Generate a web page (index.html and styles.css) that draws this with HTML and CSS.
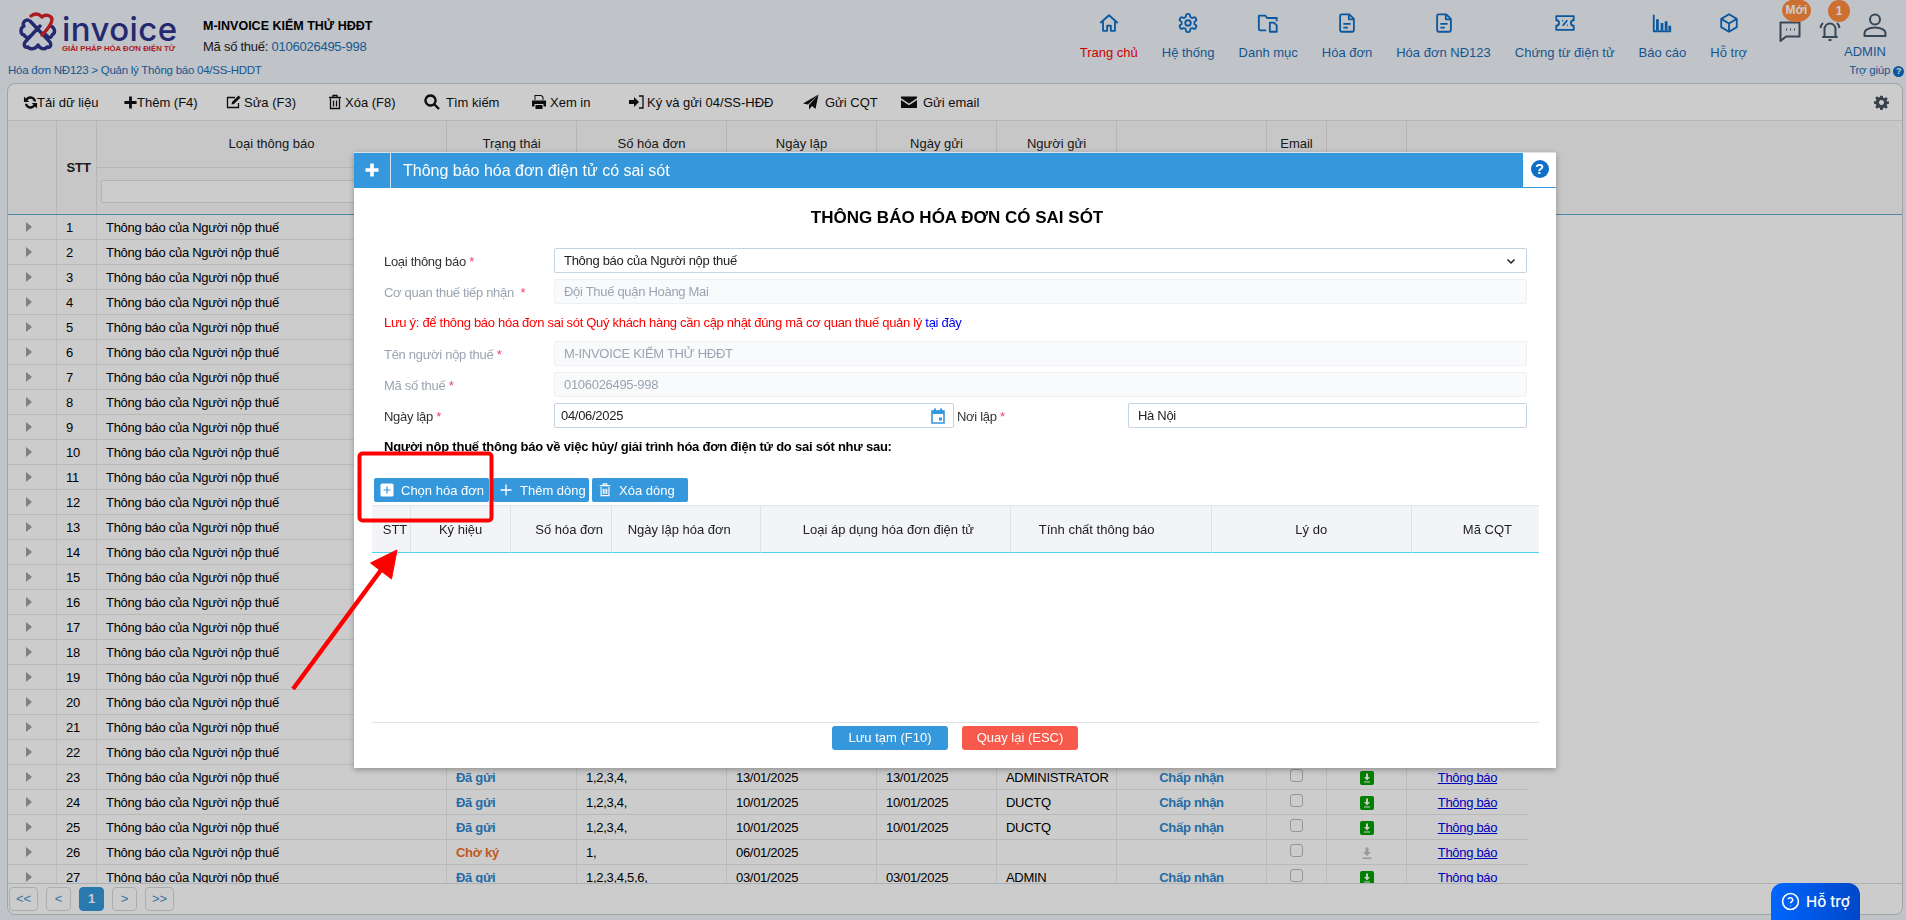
FILE: index.html
```html
<!DOCTYPE html>
<html>
  <head>
    <meta charset="utf-8" />
    <title>Quản lý Thông báo 04/SS-HDDT</title>
    <link rel="stylesheet" href="styles.css">
  </head>
  <body>
    <!--top header-->
    <div class="topbar">
      <div class="logo">
        <svg class="logo-mark" viewBox="0 0 40 40" fill="none" stroke-width="3.4" stroke-linecap="round" stroke-linejoin="round">
          <path stroke="#2f348c" d="M12 10 L31 30 C34 33 33 37 29 36 C27 39 22 38 20 34 C18 38 12 39 10 36 C6 37 5 33 8 30 L22 15"/>
          <path stroke="#2f348c" d="M10 9 C6 9 4 13 6 15 C2 17 2 23 6 24 C7 26 9 27 11 26"/>
          <path stroke="#2f348c" d="M33 15 C37 17 38 22 34 24 C34 26 32 27 30 26 L26 22"/>
          <path stroke="#d8232a" d="M13 5 C17 2 21 3 24 6 C27 3 33 4 34 8 C34 13 29 19 24 24"/>
        </svg>
        <div class="logo-text">
          <div class="logo-name">invoice</div>
          <div class="logo-sub">GIẢI PHÁP HÓA ĐƠN ĐIỆN TỬ</div>
        </div>
      </div>
      <div class="company">
        <div class="company-name">M-INVOICE KIỂM THỬ HĐĐT</div>
        <div class="company-tax">Mã số thuế: <span>0106026495-998</span></div>
      </div>
      <div class="nav">
        <div class="nav-item active">
          <svg viewBox="0 0 24 24"><path d="M2.5 12 12 3.5l9.5 8.5"/><path d="M5.5 10v10.500h4.500V15h4v5.500h4.500V10"/></svg>
          Trang chủ
        </div>
        <div class="nav-item">
          <svg viewBox="0 0 24 24"><path d="M12.22 2h-.44a2 2 0 0 0-2 2v.18a2 2 0 0 1-1 1.73l-.43.25a2 2 0 0 1-2 0l-.15-.08a2 2 0 0 0-2.73.73l-.22.38a2 2 0 0 0 .73 2.73l.15.1a2 2 0 0 1 1 1.72v.51a2 2 0 0 1-1 1.74l-.15.09a2 2 0 0 0-.73 2.73l.22.38a2 2 0 0 0 2.73.73l.15-.08a2 2 0 0 1 2 0l.43.25a2 2 0 0 1 1 1.73V20a2 2 0 0 0 2 2h.44a2 2 0 0 0 2-2v-.18a2 2 0 0 1 1-1.73l.43-.25a2 2 0 0 1 2 0l.15.08a2 2 0 0 0 2.73-.73l.22-.39a2 2 0 0 0-.73-2.73l-.15-.08a2 2 0 0 1-1-1.74v-.5a2 2 0 0 1 1-1.74l.15-.09a2 2 0 0 0 .73-2.73l-.22-.38a2 2 0 0 0-2.73-.73l-.15.08a2 2 0 0 1-2 0l-.43-.25a2 2 0 0 1-1-1.73V4a2 2 0 0 0-2-2z"/><circle cx="12" cy="12" r="3"/></svg>
          Hệ thống
        </div>
        <div class="nav-item">
          <svg viewBox="0 0 24 24"><path d="M10 20H3.500a1.500 1.500 0 0 1-1.500-1.500V4h7l2 2.500h10.500V10"/><path d="M14 11.500h4.500l3 3V21.500H14z"/></svg>
          Danh mục
        </div>
        <div class="nav-item">
          <svg viewBox="0 0 24 24"><path d="M6 2.5h8.500l5 5V20a1.500 1.500 0 0 1-1.500 1.500H6A1.500 1.500 0 0 1 4.500 20V4A1.500 1.500 0 0 1 6 2.500z"/><path d="M14 3v5h5M8 13h8M8 17h5"/></svg>
          Hóa đơn
        </div>
        <div class="nav-item">
          <svg viewBox="0 0 24 24"><path d="M6 2.5h8.500l5 5V20a1.500 1.500 0 0 1-1.500 1.500H6A1.500 1.500 0 0 1 4.500 20V4A1.500 1.500 0 0 1 6 2.500z"/><path d="M14 3v5h5M8 13h8M8 17h5"/></svg>
          Hóa đơn NĐ123
        </div>
        <div class="nav-item">
          <svg viewBox="0 0 24 24"><path d="M2.5 4.500h19v4.500a3 3 0 0 0 0 6v4.500h-19V15a3 3 0 0 0 0-6z"/><path d="M9.5 15 14.500 9M9 9.500h1M14 14.500h1"/></svg>
          Chứng từ điện tử
        </div>
        <div class="nav-item">
          <svg viewBox="0 0 24 24"><path d="M3 3v18h19"/><path class="thick" d="M7 8v12M12 12v8M16.500 10v10M20.500 15v5"/></svg>
          Báo cáo
        </div>
        <div class="nav-item">
          <svg viewBox="0 0 24 24"><path d="M12 2.500 20.500 7.500v9L12 21.500 3.500 16.500v-9z"/><path d="M3.500 7.500 12 12.500l8.500-5M12 12.500v9"/></svg>
          Hỗ trợ
        </div>
      </div>
      <div class="user-tools">
        <div class="tool-icon chat">
          <svg viewBox="0 0 24 24"><path d="M2.500 4.500h19v14H8l-5.500 4.500z"/><path d="M8 11.500h1M12 11.500h1M16 11.500h1"/></svg>
          <span class="badge badge-new">Mới</span>
        </div>
        <div class="tool-icon bell">
          <svg viewBox="0 0 24 24"><path d="M6.500 18v-7a5.500 5.500 0 0 1 11 0v7l1.500 1H5z"/><path d="M10.500 22h3M2.500 10c.3-2.200 1-3.700 2.500-5M21.500 10c-.3-2.200-1-3.700-2.500-5"/></svg>
          <span class="badge badge-count">1</span>
        </div>
        <div class="user">
          <svg viewBox="0 0 24 24"><circle cx="12" cy="6.500" r="5"/><path d="M1.500 23v-2.500c0-3.500 4.500-6 10.500-6s10.500 2.500 10.500 6V23z"/></svg>
          ADMIN
        </div>
      </div>
    </div>
    <div class="crumbs">
      <div>Hóa đơn NĐ123 &gt; Quản lý Thông báo 04/SS-HDDT</div>
      <div class="help-link">Trợ giúp <span class="help-dot">?</span></div>
    </div>

    <!--main panel-->
    <div class="panel">
      <div class="toolbar">
        <div class="tool tool-tight"><svg viewBox="0 0 16 16"><path d="M14 6.800A6.200 6.200 0 0 0 3.100 3.700L1 1.700V7.500h5.800L4.800 5.500a3.800 3.800 0 0 1 6.700 1.300zM2 9.200a6.200 6.200 0 0 0 10.900 3.100l2.100 2V8.500H9.200l2 2a3.800 3.800 0 0 1-6.700-1.300z"/></svg>Tải dữ liệu</div>
        <div class="tool tool-tight"><svg viewBox="0 0 16 16"><path d="M6.500 1.500h3v5h5v3h-5v5h-3v-5h-5v-3h5z"/></svg>Thêm (F4)</div>
        <div class="tool tool-s2"><svg viewBox="0 0 16 16"><path class="line" d="M12.500 9v4.500h-11v-10H9"/><path d="M6 8 12.500 1.500l2 2L8 10l-2.500.5z"/></svg>Sửa (F3)</div>
        <div class="tool tool-s2"><svg viewBox="0 0 16 16"><path class="line" d="M3.500 4.500v10h9v-10M2 3.500h12M6 3.500V1.500h4v2M6.500 6.500v6M9.500 6.500v6"/></svg>Xóa (F8)</div>
        <div class="tool tool-s6"><svg viewBox="0 0 16 16"><path class="line thick-line" d="M6.500 1.500a5 5 0 1 0 .01 0zM10 10l5 5"/></svg>Tìm kiếm</div>
        <div class="tool tool-s3"><svg viewBox="0 0 16 16"><path d="M3.500 1h7l2 2v3h-1V3.500L10 2H4.500v4h-1zM1 6.500h14v6h-2.500V10h-9v2.500H1zM4.500 11h7v4h-7z"/></svg>Xem in</div>
        <div class="tool tool-s3"><svg viewBox="0 0 16 16"><path d="M1 6h5V3l5 5-5 5v-3H1z"/><path class="line" d="M11 2h4v12h-4"/></svg>Ký và gửi 04/SS-HĐĐ</div>
        <div class="tool tool-s6"><svg viewBox="0 0 16 16"><path d="M15.500.5 12.500 15 9 12l-3 3.500V11zM0 9.500 15.500.5 5 10.500z"/></svg>Gửi CQT</div>
        <div class="tool tool-s6"><svg viewBox="0 0 16 16"><path d="M0 2.500h16v1.800L8 9.500 0 4.300zM0 6l8 5.200L16 6v8H0z"/></svg>Gửi email</div>
        <svg class="tool-gear" viewBox="0 0 24 24"><path d="M10 1h4l.6 3.200 1.900.8 2.700-1.900 2.800 2.800-1.900 2.700.8 1.900L24 10v4l-3.100.6-.8 1.900 1.900 2.700-2.800 2.800-2.700-1.900-1.900.8L14 24h-4l-.6-3.100-1.900-.8-2.700 1.900-2.800-2.800 1.900-2.700-.8-1.900L0 14v-4l3.100-.6.8-1.900L2 4.800 4.800 2l2.700 1.900 1.900-.8zM12 8a4 4 0 1 0 .01 0z" fill-rule="evenodd"/></svg>
      </div>

      <div class="grid-head">
        <table class="data-table">
          <colgroup>
            <col class="c-exp"><col class="c-stt"><col class="c-type"><col class="c-status"><col class="c-no"><col class="c-date"><col class="c-send"><col class="c-user"><col class="c-result"><col class="c-check"><col class="c-dl"><col class="c-link">
          </colgroup>
          <tr class="head-top">
            <th rowspan="2"></th>
            <th rowspan="2" class="th-stt">STT</th>
            <th>Loại thông báo</th>
            <th>Trạng thái</th>
            <th>Số hóa đơn</th>
            <th>Ngày lập</th>
            <th>Ngày gửi</th>
            <th>Người gửi</th>
            <th></th>
            <th>Email</th>
            <th></th>
            <th class="no-line"></th>
          </tr>
          <tr class="head-filter">
            <th><input class="filter" /></th>
            <th></th><th></th><th></th><th></th><th></th><th></th><th></th><th></th>
            <th class="no-line"></th>
          </tr>
        </table>
      </div>

      <div class="grid-body">
        <table class="data-table">
          <colgroup>
            <col class="c-exp"><col class="c-stt"><col class="c-type"><col class="c-status"><col class="c-no"><col class="c-date"><col class="c-send"><col class="c-user"><col class="c-result"><col class="c-check"><col class="c-dl"><col class="c-link">
          </colgroup>
          <tr><td class="exp"><i></i></td><td>1</td><td>Thông báo của Người nộp thuế</td><td colspan="9"></td></tr>
          <tr><td class="exp"><i></i></td><td>2</td><td>Thông báo của Người nộp thuế</td><td colspan="9"></td></tr>
          <tr><td class="exp"><i></i></td><td>3</td><td>Thông báo của Người nộp thuế</td><td colspan="9"></td></tr>
          <tr><td class="exp"><i></i></td><td>4</td><td>Thông báo của Người nộp thuế</td><td colspan="9"></td></tr>
          <tr><td class="exp"><i></i></td><td>5</td><td>Thông báo của Người nộp thuế</td><td colspan="9"></td></tr>
          <tr><td class="exp"><i></i></td><td>6</td><td>Thông báo của Người nộp thuế</td><td colspan="9"></td></tr>
          <tr><td class="exp"><i></i></td><td>7</td><td>Thông báo của Người nộp thuế</td><td colspan="9"></td></tr>
          <tr><td class="exp"><i></i></td><td>8</td><td>Thông báo của Người nộp thuế</td><td colspan="9"></td></tr>
          <tr><td class="exp"><i></i></td><td>9</td><td>Thông báo của Người nộp thuế</td><td colspan="9"></td></tr>
          <tr><td class="exp"><i></i></td><td>10</td><td>Thông báo của Người nộp thuế</td><td colspan="9"></td></tr>
          <tr><td class="exp"><i></i></td><td>11</td><td>Thông báo của Người nộp thuế</td><td colspan="9"></td></tr>
          <tr><td class="exp"><i></i></td><td>12</td><td>Thông báo của Người nộp thuế</td><td colspan="9"></td></tr>
          <tr><td class="exp"><i></i></td><td>13</td><td>Thông báo của Người nộp thuế</td><td colspan="9"></td></tr>
          <tr><td class="exp"><i></i></td><td>14</td><td>Thông báo của Người nộp thuế</td><td colspan="9"></td></tr>
          <tr><td class="exp"><i></i></td><td>15</td><td>Thông báo của Người nộp thuế</td><td colspan="9"></td></tr>
          <tr><td class="exp"><i></i></td><td>16</td><td>Thông báo của Người nộp thuế</td><td colspan="9"></td></tr>
          <tr><td class="exp"><i></i></td><td>17</td><td>Thông báo của Người nộp thuế</td><td colspan="9"></td></tr>
          <tr><td class="exp"><i></i></td><td>18</td><td>Thông báo của Người nộp thuế</td><td colspan="9"></td></tr>
          <tr><td class="exp"><i></i></td><td>19</td><td>Thông báo của Người nộp thuế</td><td colspan="9"></td></tr>
          <tr><td class="exp"><i></i></td><td>20</td><td>Thông báo của Người nộp thuế</td><td colspan="9"></td></tr>
          <tr><td class="exp"><i></i></td><td>21</td><td>Thông báo của Người nộp thuế</td><td colspan="9"></td></tr>
          <tr><td class="exp"><i></i></td><td>22</td><td>Thông báo của Người nộp thuế</td><td colspan="9"></td></tr>
          <tr><td class="exp"><i></i></td><td>23</td><td>Thông báo của Người nộp thuế</td><td class="sent">Đã gửi</td><td>1,2,3,4,</td><td>13/01/2025</td><td>13/01/2025</td><td>ADMINISTRATOR</td><td class="accept">Chấp nhận</td><td class="mid"><span class="check"></span></td><td class="mid"><span class="dl"><svg viewBox="0 0 12 14"><path d="M5 2.500h2V6h2L6 9.500 3 6h2zM3 10.500h6v1H3z"/></svg></span></td><td class="link"><a href="#">Thông báo</a></td></tr>
          <tr><td class="exp"><i></i></td><td>24</td><td>Thông báo của Người nộp thuế</td><td class="sent">Đã gửi</td><td>1,2,3,4,</td><td>10/01/2025</td><td>10/01/2025</td><td>DUCTQ</td><td class="accept">Chấp nhận</td><td class="mid"><span class="check"></span></td><td class="mid"><span class="dl"><svg viewBox="0 0 12 14"><path d="M5 2.500h2V6h2L6 9.500 3 6h2zM3 10.500h6v1H3z"/></svg></span></td><td class="link"><a href="#">Thông báo</a></td></tr>
          <tr><td class="exp"><i></i></td><td>25</td><td>Thông báo của Người nộp thuế</td><td class="sent">Đã gửi</td><td>1,2,3,4,</td><td>10/01/2025</td><td>10/01/2025</td><td>DUCTQ</td><td class="accept">Chấp nhận</td><td class="mid"><span class="check"></span></td><td class="mid"><span class="dl"><svg viewBox="0 0 12 14"><path d="M5 2.500h2V6h2L6 9.500 3 6h2zM3 10.500h6v1H3z"/></svg></span></td><td class="link"><a href="#">Thông báo</a></td></tr>
          <tr><td class="exp"><i></i></td><td>26</td><td>Thông báo của Người nộp thuế</td><td class="wait">Chờ ký</td><td>1,</td><td>06/01/2025</td><td></td><td></td><td></td><td class="mid"><span class="check"></span></td><td class="mid"><span class="dl dl-off"><svg viewBox="0 0 12 14"><path d="M4.500 1.500h3V6H10L6 10 2 6h2.500zM1.500 11.500h9v1.500h-9z"/></svg></span></td><td class="link"><a href="#">Thông báo</a></td></tr>
          <tr><td class="exp"><i></i></td><td>27</td><td>Thông báo của Người nộp thuế</td><td class="sent">Đã gửi</td><td>1,2,3,4,5,6,</td><td>03/01/2025</td><td>03/01/2025</td><td>ADMIN</td><td class="accept">Chấp nhận</td><td class="mid"><span class="check"></span></td><td class="mid"><span class="dl"><svg viewBox="0 0 12 14"><path d="M5 2.500h2V6h2L6 9.500 3 6h2zM3 10.500h6v1H3z"/></svg></span></td><td class="link"><a href="#">Thông báo</a></td></tr>
        </table>
      </div>

      <div class="pager">
        <div class="page-btn wide">&lt;&lt;</div>
        <div class="page-btn">&lt;</div>
        <div class="page-btn current">1</div>
        <div class="page-btn">&gt;</div>
        <div class="page-btn wide">&gt;&gt;</div>
      </div>
    </div>

    <div class="overlay"></div>

    <!--dialog-->
    <div class="modal">
      <div class="modal-head">
        <div class="modal-plus">
          <svg viewBox="0 0 16 16"><path d="M6.200 1.500h3.600v4.700h4.700v3.600H9.800v4.700H6.200V9.800H1.500V6.200h4.700z"/></svg>
        </div>
        <div class="modal-title">Thông báo hóa đơn điện tử có sai sót</div>
        <div class="modal-help"><span class="help-dot big">?</span></div>
      </div>
      <div class="form-title">THÔNG BÁO HÓA ĐƠN CÓ SAI SÓT</div>
      <div class="form">
        <div class="form-row">
          <label>Loại thông báo <b>*</b></label>
          <div class="field">
            Thông báo của Người nộp thuế
            <svg class="chevron" viewBox="0 0 12 12"><path d="M2.500 4.500 6 8l3.500-3.500"/></svg>
          </div>
        </div>
        <div class="form-row off">
          <label>Cơ quan thuế tiếp nhận &nbsp;<b>*</b></label>
          <div class="field">Đội Thuế quận Hoàng Mai</div>
        </div>
        <div class="form-row note">Lưu ý: để thông báo hóa đơn sai sót Quý khách hàng cần cập nhật đúng mã cơ quan thuế quản lý&nbsp;<a href="#">tại đây</a></div>
        <div class="form-row off">
          <label>Tên người nộp thuế <b>*</b></label>
          <div class="field">M-INVOICE KIỂM THỬ HĐĐT</div>
        </div>
        <div class="form-row off">
          <label>Mã số thuế <b>*</b></label>
          <div class="field">0106026495-998</div>
        </div>
        <div class="form-row">
          <label>Ngày lập <b>*</b></label>
          <div class="field date">
            04/06/2025
            <svg class="calendar" viewBox="0 0 14 16"><path d="M1 3h12v12H1z" fill="none" stroke-width="1.600"/><path d="M1 2.500h12V6H1zM3 .5h2v3H3zM9 .5h2v3H9zM8 9.500h3v3H8z"/></svg>
          </div>
          <label class="place-label">Nơi lập <b>*</b></label>
          <div class="field">Hà Nội</div>
        </div>
        <div class="form-row strong">Người nộp thuế thông báo về việc hủy/ giải trình hóa đơn điện tử do sai sót như sau:</div>
      </div>

      <div class="actions">
        <div class="act act-pick">
          <svg viewBox="0 0 14 14"><rect x="0.500" y="0.500" width="13" height="13" rx="1.500" class="act-fill"/><path class="act-plus" d="M7 3.500v7M3.500 7h7"/></svg>
          Chọn hóa đơn
        </div>
        <div class="act act-add">
          <svg viewBox="0 0 14 14"><path class="act-white" d="M7 1.500v11M1.500 7h11"/></svg>
          Thêm dòng
        </div>
        <div class="act act-del">
          <svg viewBox="0 0 14 16"><path class="act-white" d="M2.500 4.500v10h9v-10M1 3h12M5 3V1h4v2M5 6.500v6M7 6.500v6M9 6.500v6"/></svg>
          Xóa dòng
        </div>
      </div>

      <div class="detail">
        <table class="detail-table">
          <colgroup>
            <col class="d-stt"><col class="d-sign"><col class="d-no"><col class="d-date"><col class="d-kind"><col class="d-prop"><col class="d-why"><col class="d-code">
          </colgroup>
          <tr>
            <th class="shift-stt">STT</th>
            <th>Ký hiệu</th>
            <th class="shift-no">Số hóa đơn</th>
            <th class="shift-date">Ngày lập hóa đơn</th>
            <th class="shift-kind">Loại áp dụng hóa đơn điện tử</th>
            <th class="shift-prop">Tính chất thông báo</th>
            <th>Lý do</th>
            <th class="shift-code">Mã CQT</th>
          </tr>
        </table>
      </div>

      <div class="modal-foot">
        <div class="foot-btn save">Lưu tạm (F10)</div>
        <div class="foot-btn back">Quay lại (ESC)</div>
      </div>
    </div>

    <!--red annotation drawn on the screenshot-->
    <svg class="mark" viewBox="0 0 1906 920">
      <rect x="359.500" y="453.500" width="132" height="67" rx="3" fill="none" stroke="#f00" stroke-width="4"/>
      <path d="M293 689 384 566" fill="none" stroke="#f00" stroke-width="4.500"/>
      <path d="M397 550 370.500 563 391.500 579z" fill="#f00" stroke="#f00" stroke-linejoin="round"/>
    </svg>

    <div class="support">
      <svg viewBox="0 0 24 24"><circle cx="12" cy="12" r="10"/><path d="M9 9.200a3 3 0 0 1 5.800 1c0 2-2.800 2.400-2.800 4M12 17.500v.5"/></svg>
      Hỗ trợ
    </div>
  </body>
</html>
```

FILE: styles.css
```css
* {
  padding: 0;
  margin: 0;
  box-sizing: border-box;
}
body {
  background-color: #f1f5fb;
  height: 100vh;
  overflow: hidden;
  display: flex;
  flex-direction: column;
  font-family: "Liberation Sans", Arial, sans-serif;
  font-size: 13px;
  color: #000;
}

/*header*/
.topbar {
  height: 62px;
  display: flex;
  flex: none;
}
.logo {
  width: 203px;
  padding: 11px 0 0 18px;
  display: flex;
}
.logo-mark {
  width: 40px;
  height: 40px;
  flex: none;
}
.logo-text {
  margin-left: 4px;
}
.logo-name {
  font-family: Inter, sans-serif;
  font-size: 33px;
  font-weight: 500;
  line-height: 36px;
  height: 33px;
  letter-spacing: 0.4px;
  color: #2f348c;
}
.logo-sub {
  font-size: 7.8px;
  font-weight: bold;
  line-height: 10px;
  color: #d8232a;
  white-space: nowrap;
}
.company {
  padding-top: 18px;
}
.company-name {
  font-size: 12.5px;
  font-weight: bold;
  line-height: 17px;
}
.company-tax {
  margin-top: 3px;
  line-height: 17px;
  letter-spacing: -0.25px;
  color: #222;
}
.company-tax span {
  color: #1a70b8;
}
.nav {
  display: flex;
  margin-left: auto;
  padding-top: 12px;
}
.nav-item {
  padding: 0 12px;
  display: flex;
  flex-direction: column;
  align-items: center;
  color: #1b6cb5;
  line-height: 16px;
  white-space: nowrap;
}
.nav-item.active {
  color: #f00;
}
.nav-item svg {
  width: 22px;
  height: 22px;
  margin-bottom: 11px;
  fill: none;
  stroke: #0f6fc6;
  stroke-width: 2;
  stroke-linejoin: round;
}
.nav-item .thick {
  stroke-width: 3;
}
.user-tools {
  display: flex;
  padding-left: 19px;
  width: 147px;
  color: #1b6cb5;
}
.tool-icon {
  position: relative;
  width: 40px;
  padding-top: 18px;
}
.tool-icon svg,
.user svg {
  width: 24px;
  height: 24px;
  fill: none;
  stroke: #46596d;
  stroke-width: 2;
  stroke-linejoin: round;
}
.badge {
  position: absolute;
  background-color: #ff8b3d;
  color: #fff;
  border-radius: 50%;
  font-weight: bold;
  text-align: center;
}
.badge-new {
  top: -1px;
  left: 4px;
  width: 29px;
  height: 23px;
  font-size: 12px;
  line-height: 22px;
}
.badge-count {
  top: 0;
  left: 10px;
  width: 22px;
  height: 22px;
  font-size: 12px;
  line-height: 22px;
}
.user {
  width: 62px;
  margin-left: -14px;
  padding-top: 13px;
  line-height: 16px;
}
.user svg {
  display: block;
  margin: 0 0 7px 19px;
}
.crumbs {
  height: 21px;
  flex: none;
  display: flex;
  justify-content: space-between;
  padding: 0 2px 0 8px;
  font-size: 11.5px;
  letter-spacing: -0.25px;
  line-height: 16px;
  color: #1b6cb5;
}
.help-dot {
  display: inline-block;
  width: 11px;
  height: 11px;
  border-radius: 50%;
  background-color: #0f6fc6;
  color: #fff;
  font-size: 9px;
  font-weight: bold;
  line-height: 11px;
  text-align: center;
}
.help-dot.big {
  width: 18px;
  height: 18px;
  font-size: 15px;
  line-height: 18px;
}

/*main panel*/
.panel {
  flex: 1;
  min-height: 0;
  margin: 0 3px 5px 7px;
  background-color: #fff;
  border: 1px solid #c8cdd2;
  border-radius: 8px;
  display: flex;
  flex-direction: column;
  overflow: hidden;
}
.toolbar {
  height: 37px;
  flex: none;
  display: grid;
  grid-template-columns: 100px 103px 101px 97px 107px 97px 175px 98px 1fr 16px;
  align-items: center;
  padding: 0 12px 0 15px;
  border-bottom: 1px solid #e4e4e4;
  white-space: nowrap;
}
.tool {
  display: flex;
  align-items: center;
  color: #111;
}
.tool svg {
  width: 16px;
  height: 16px;
  flex: none;
  fill: #111;
}
.tool-tight svg {
  width: 15px;
  height: 15px;
  margin-right: -1px;
}
.tool-s2 svg {
  margin-right: 2px;
}
.tool-s3 svg {
  margin-right: 3px;
}
.tool-s6 svg {
  margin-right: 6px;
}
.tool .line {
  fill: none;
  stroke: #111;
  stroke-width: 1.3;
}
.tool .thick-line {
  stroke-width: 2.4;
}
.tool-gear {
  width: 15px;
  height: 15px;
  fill: #46525e;
  grid-column: 10;
}
.grid-head {
  height: 94px;
  flex: none;
  border-bottom: 1px solid #5fa9cf;
  background-color: #f9f9fa;
}
.grid-body {
  flex: 1;
  min-height: 0;
  overflow: hidden;
}
.data-table {
  width: 1520px;
  table-layout: fixed;
  border-collapse: separate;
  border-spacing: 0;
}
.c-exp { width: 49px; }
.c-stt { width: 40px; }
.c-type { width: 350px; }
.c-status { width: 130px; }
.c-no { width: 150px; }
.c-date { width: 150px; }
.c-send { width: 120px; }
.c-user { width: 120px; }
.c-result { width: 150px; }
.c-check { width: 60px; }
.c-dl { width: 80px; }
.c-link { width: 121px; }
.data-table th {
  font-weight: normal;
  color: #222;
  border-right: 1px solid #e4e4e4;
  text-align: center;
}
.data-table th.no-line {
  border-right: none;
}
.head-top th {
  height: 47px;
  padding-bottom: 1px;
}
.head-top th:nth-child(n+3) {
  border-bottom: 1px solid #e4e4e4;
}
.head-filter th {
  height: 46px;
  padding: 0 5px 0 4px;
}
.data-table .th-stt {
  text-align: right;
  padding-right: 5px;
  font-weight: bold;
}
.filter {
  display: block;
  width: 100%;
  height: 23px;
  border: 1px solid #dedede;
  border-radius: 2px;
  background-color: #fff;
}
.data-table td {
  height: 25px;
  padding: 0 9px;
  border-right: 1px solid #ececec;
  border-bottom: 1px solid #e8e8e8;
  letter-spacing: -0.3px;
  white-space: nowrap;
}
.data-table td:last-child {
  border-right: none;
}
.exp i {
  display: block;
  margin-left: 9px;
  width: 0;
  height: 0;
  border-left: 6px solid #9aa0a6;
  border-top: 5px solid transparent;
  border-bottom: 5px solid transparent;
}
.sent {
  color: #2e88cf;
  font-weight: bold;
}
.wait {
  color: #f0702a;
  font-weight: bold;
}
.accept {
  color: #2e88cf;
  font-weight: bold;
  text-align: center;
}
.mid,
.link {
  text-align: center;
}
.check {
  display: block;
  width: 13px;
  height: 13px;
  margin: -3px auto 0;
  background: #fff;
  border: 1px solid #bbb;
  border-radius: 3px;
}
.dl {
  display: inline-block;
  vertical-align: middle;
  width: 14px;
  height: 14px;
  background-color: #00a000;
  border-radius: 2px;
}
.dl svg {
  display: block;
  width: 14px;
  height: 14px;
  fill: #fff;
}
.dl-off {
  background: none;
}
.dl-off svg {
  fill: #c0c0c0;
}
.link a {
  color: #0000ee;
}
.pager {
  height: 31px;
  flex: none;
  display: flex;
  gap: 8px;
  align-items: center;
  padding-left: 1px;
  border-top: 1px solid #d8dcdf;
}
.page-btn {
  width: 25px;
  height: 24px;
  border: 1px solid #d3dae0;
  border-radius: 4px;
  color: #4a90c8;
  line-height: 21px;
  text-align: center;
}
.page-btn.wide {
  width: 29px;
}
.page-btn.current {
  background-color: #3498db;
  border-color: #3498db;
  color: #fff;
  font-weight: bold;
}

.overlay {
  position: fixed;
  top: 0;
  left: 0;
  width: 100%;
  height: 100%;
  background-color: rgba(0, 0, 0, 0.2);
}

/*dialog*/
.modal {
  position: fixed;
  top: 152px;
  left: 354px;
  width: 1202px;
  height: 616px;
  background-color: #fff;
  box-shadow: 0 2px 6px rgba(0, 0, 0, 0.3);
  border-top: 1px solid #d9e2e8;
}
.modal-head {
  height: 35px;
  display: flex;
  align-items: center;
  background-color: #3598dc;
  color: #fff;
}
.modal-plus {
  width: 37px;
  height: 100%;
  padding-top: 9px;
  border-right: 1px solid #cfe6f6;
  text-align: center;
}
.modal-plus svg {
  width: 16px;
  height: 16px;
  fill: #fff;
}
.modal-title {
  flex: 1;
  padding-left: 12px;
  font-size: 16px;
}
.modal-help {
  width: 33px;
  height: 34px;
  margin-bottom: 1px;
  padding-top: 7px;
  background-color: #fff;
  text-align: center;
}
.form-title {
  height: 60px;
  padding-left: 4px;
  font-size: 17px;
  font-weight: bold;
  line-height: 60px;
  text-align: center;
}
.form {
  padding: 0 29px 0 30px;
}
.form-row {
  height: 25px;
  margin-bottom: 6px;
  display: flex;
  align-items: center;
  letter-spacing: -0.3px;
  white-space: nowrap;
}
.form-row label {
  width: 170px;
  flex: none;
  color: #333;
  padding-top: 2px;
}
.form-row b {
  color: #f1416c;
  font-weight: normal;
}
.form-row.off label {
  color: #9aa5b1;
}
.field {
  flex: 1;
  height: 100%;
  display: flex;
  align-items: center;
  justify-content: space-between;
  padding: 0 9px;
  background-color: #fff;
  border: 1px solid #c3d3e2;
  border-radius: 2px;
  color: #222;
}
.form-row.off .field {
  background-color: #f9fafc;
  border-color: #eef0f3;
  color: #9aa5b1;
}
.field.date {
  flex: none;
  width: 400px;
  padding: 0 8px 0 6px;
}
.place-label.place-label {
  width: 171px;
  margin-left: 3px;
}
.chevron {
  width: 12px;
  height: 12px;
  fill: none;
  stroke: #222;
  stroke-width: 1.5;
}
.calendar {
  width: 14px;
  height: 16px;
  fill: #3598dc;
  stroke: #3598dc;
  stroke-width: 0;
}
.note {
  color: #f00;
}
.note a {
  color: #0000ee;
  text-decoration: none;
}
.strong {
  font-weight: bold;
  letter-spacing: -0.23px;
}
.actions {
  display: flex;
  margin: 19px 0 0 20px;
  height: 24px;
}
.act {
  display: flex;
  align-items: center;
  background-color: #3598dc;
  border-radius: 2px;
  color: #fff;
  white-space: nowrap;
}
.act svg {
  width: 14px;
  height: 14px;
  margin: 0 7px 0 6px;
}
.act-pick {
  width: 115px;
}
.act-add {
  width: 96px;
  margin-left: 4px;
}
.act-del {
  width: 96px;
  margin-left: 3px;
}
.act-fill {
  fill: #fff;
}
.act-plus {
  stroke: #3598dc;
  stroke-width: 1.2;
}
.act-white {
  stroke: #fff;
  stroke-width: 1.3;
  fill: none;
}
.detail {
  margin: 3px 17px 0 18px;
  height: 218px;
  border-bottom: 1px solid #dde3e8;
}
.detail-table {
  width: 100%;
  table-layout: fixed;
  border-collapse: separate;
  border-spacing: 0;
}
.d-stt { width: 39px; }
.d-sign { width: 100px; }
.d-no { width: 101px; }
.d-date { width: 149px; }
.d-kind { width: 249px; }
.d-prop { width: 201px; }
.d-why { width: 200px; }
.d-code { width: 127px; }
.detail-table th {
  height: 48px;
  background-color: #f3f4f8;
  border-top: 1px solid #e4e6eb;
  border-right: 1px solid #dfe2e7;
  border-bottom: 1px solid #4fd0f0;
  color: #222;
  font-weight: normal;
  white-space: nowrap;
}
.detail-table th:last-child {
  border-right: none;
}
.detail-table .shift-stt { padding-left: 8px; }
.detail-table .shift-no { padding-left: 16px; }
.detail-table .shift-date { padding-right: 14px; }
.detail-table .shift-kind { padding-left: 6px; }
.detail-table .shift-prop { padding-right: 28px; }
.detail-table .shift-code { padding-left: 24px; }
.modal-foot {
  display: flex;
  justify-content: center;
  gap: 14px;
  margin-top: 3px;
}
.foot-btn {
  width: 116px;
  height: 24px;
  border-radius: 3px;
  color: #fff;
  line-height: 23px;
  text-align: center;
}
.save {
  background-color: #3598dc;
}
.back {
  background-color: #f75a4b;
}

/*red marks on top of everything*/
.mark {
  position: fixed;
  top: 0;
  left: 0;
  width: 1906px;
  height: 920px;
  pointer-events: none;
}
.support {
  position: fixed;
  left: 1771px;
  bottom: 0;
  width: 89px;
  height: 37px;
  display: flex;
  align-items: center;
  gap: 6px;
  padding-left: 10px;
  border-radius: 12px 12px 0 0;
  background: linear-gradient(90deg, #0066ff, #0047c8);
  color: #fff;
  font-family: Inter, sans-serif;
  font-size: 15px;
  font-weight: 500;
  white-space: nowrap;
}
.support svg {
  width: 19px;
  height: 19px;
  flex: none;
  fill: none;
  stroke: #fff;
  stroke-width: 2;
}
```
